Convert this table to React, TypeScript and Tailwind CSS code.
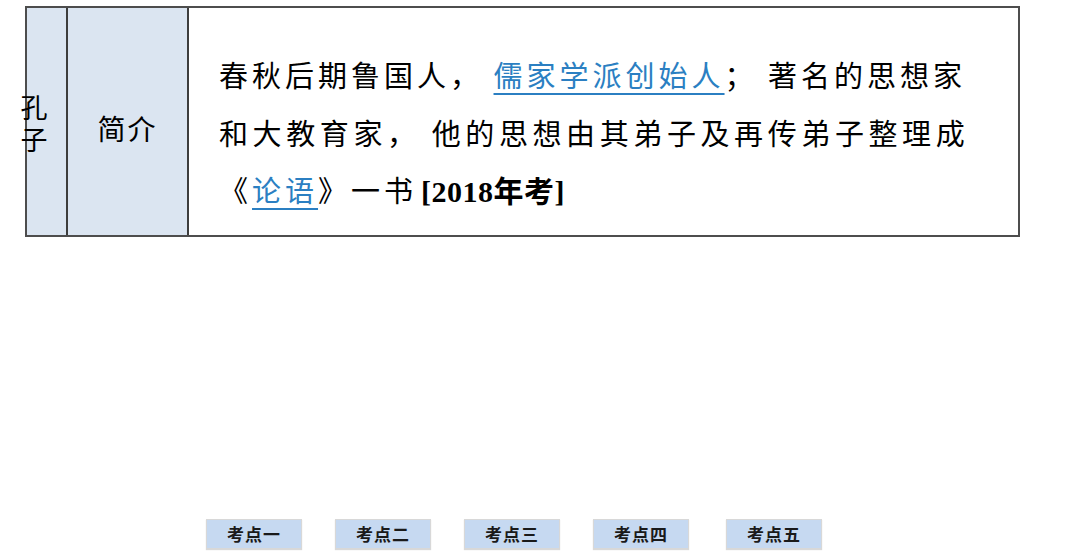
import React from "react";

const cjk = { fontFamily: '"Noto Sans CJK SC", "Noto Sans", sans-serif' };

export default function App() {
  const btns = ["考点一", "考点二", "考点三", "考点四", "考点五"];
  return (
    <div className="w-[1080px] h-[555px] bg-white flex flex-col overflow-hidden" style={cjk}>
      <div className="ml-[25px] mt-[6px] w-[995px] h-[231px] flex border-2 border-[#4d4d4d] text-black">
        <div className="w-[41px] bg-[#dbe5f1] border-r-2 border-[#3d3d3d] flex items-center">
          <div className="-ml-[8px] mt-[2px] w-[30px] text-[27px] leading-[32px] text-center">
            孔<br />子
          </div>
        </div>
        <div className="w-[121px] bg-[#dbe5f1] border-r-2 border-[#3d3d3d] flex items-center justify-center">
          <div className="text-[28px] leading-[32px] tracking-[2px] pt-[12px]">简介</div>
        </div>
        <div className="flex-1 pl-[30px] pt-[38px] text-[29px] leading-[57.5px] tracking-[4px] whitespace-nowrap">
          <div>
            春秋后期鲁国人，{" "}
            <span className="text-[#2b7fc2] underline decoration-[2px] underline-offset-[6px]">儒家学派创始人</span>
            ；{" "}著名的思想家
          </div>
          <div className="tracking-[4.6px]">和大教育家，{" "}他的思想由其弟子及再传弟子整理成</div>
          <div>
            《<span className="text-[#2b7fc2] underline decoration-[2px] underline-offset-[6px]">论语</span>》一书
            <span
              className="ml-[4px] font-bold tracking-[0.5px] text-[30px]"
              style={{ fontFamily: '"Liberation Serif", "Noto Sans CJK SC", serif' }}
            >
              [2018年考]
            </span>
          </div>
        </div>
      </div>
      <div className="ml-[206px] mt-[282px] flex gap-[33px]">
        {btns.map((b, i) => (
          <div
            key={b}
            className={`w-[96px] h-[30px] bg-[#c6d9f1] border border-[#d8d8d8] shadow-[0_1px_1px_rgba(0,0,0,0.15)] flex items-center justify-center text-[17px] font-bold text-[#1a1a1a] tracking-[1px] ${i === 4 ? "ml-[4px]" : ""}`}
          >
            {b}
          </div>
        ))}
      </div>
    </div>
  );
}
